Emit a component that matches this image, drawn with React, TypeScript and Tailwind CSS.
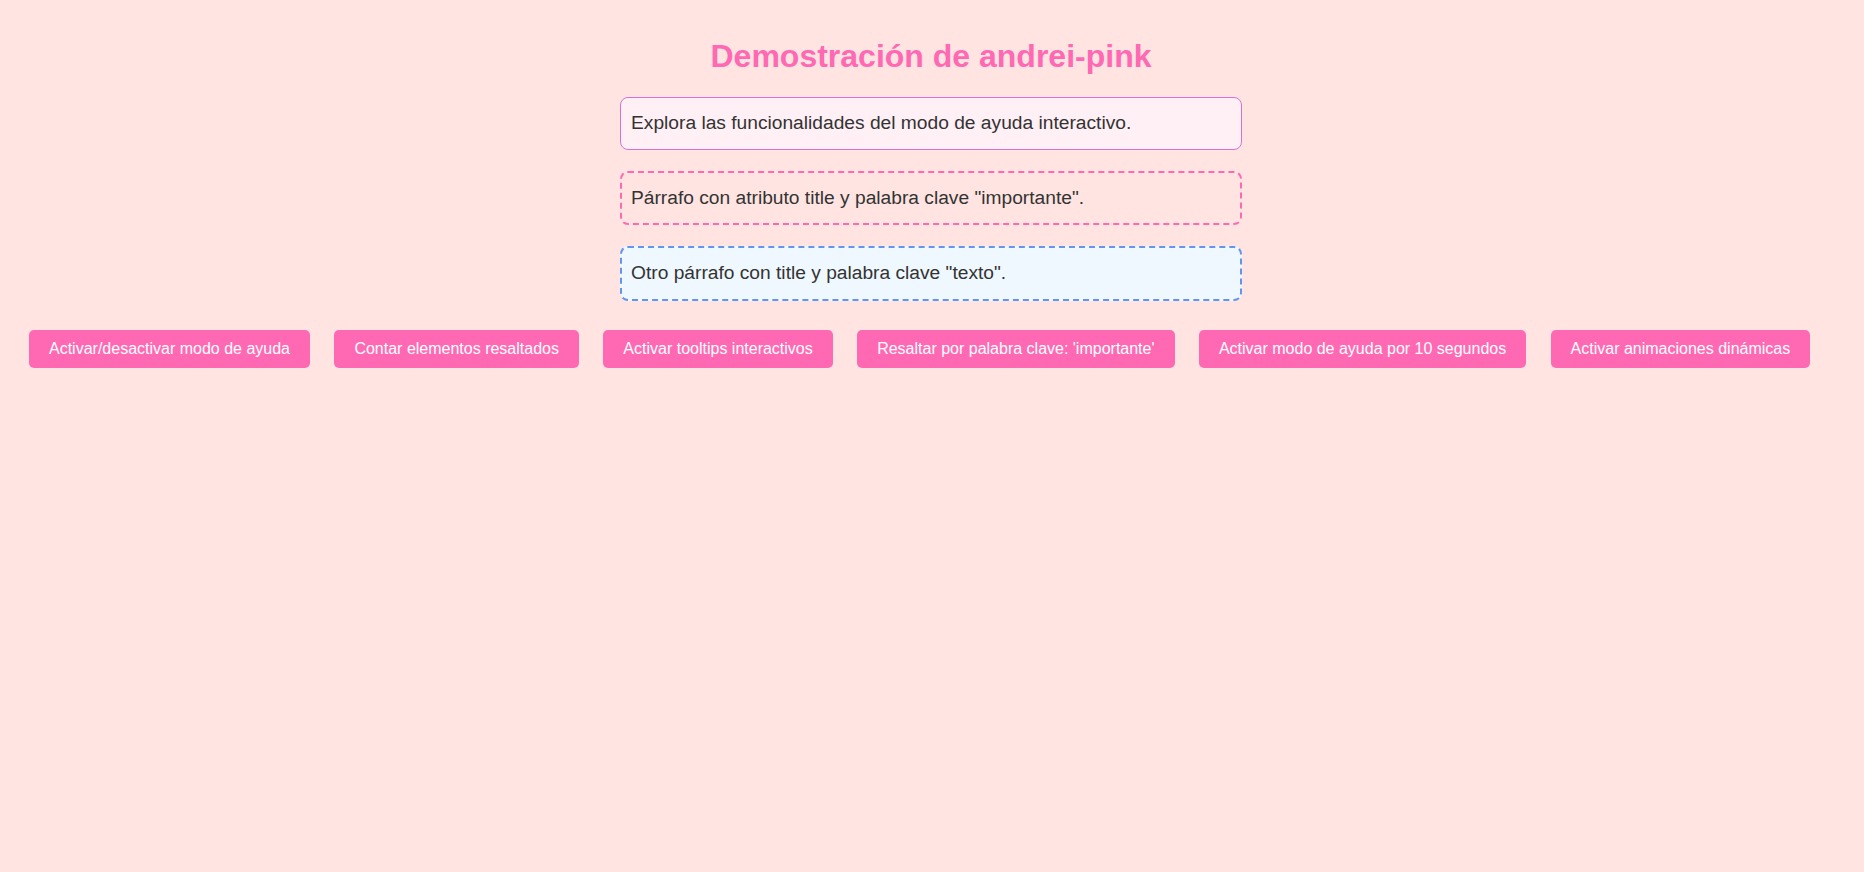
export default function App() {
  const buttons = [
    "Activar/desactivar modo de ayuda",
    "Contar elementos resaltados",
    "Activar tooltips interactivos",
    "Resaltar por palabra clave: 'importante'",
    "Activar modo de ayuda por 10 segundos",
    "Activar animaciones dinámicas",
  ];

  return (
    <div className="min-h-screen bg-[#ffe4e1] pt-[38px] font-['Liberation_Sans',Arial,sans-serif]">
      <h1 className="pr-[2px] text-center text-[32px] leading-[36px] font-bold text-[#ff69b4]">
        Demostración de andrei-pink
      </h1>

      <div className="mt-[23px] flex flex-col items-center gap-[21px] pr-[2px] text-[19.2px] leading-[30.72px] text-[#333]">
        <p className="w-[622px] rounded-lg border border-[#da70d6] bg-[#fff0f5] p-[10px]">
          Explora las funcionalidades del modo de ayuda interactivo.
        </p>
        <p
          title="Este es un párrafo importante"
          className="w-[622px] rounded-lg border-2 border-dashed border-[#ff69b4] px-[9px] py-[10px]"
        >
          Párrafo con atributo title y palabra clave "importante".
        </p>
        <p
          title="Otro texto de ayuda"
          className="w-[622px] rounded-lg border-2 border-dashed border-[#6495ed] bg-[#f0f8ff] px-[9px] py-[10px]"
        >
          Otro párrafo con title y palabra clave "texto".
        </p>
      </div>

      <div className="mt-[29px] flex flex-wrap gap-[24.4px] pl-[29px]">
        {buttons.map((label) => (
          <button
            key={label}
            type="button"
            className="rounded-[5px] bg-[#ff69b4] px-5 py-[10px] text-base leading-[18px] text-white cursor-pointer"
          >
            {label}
          </button>
        ))}
      </div>
    </div>
  );
}
